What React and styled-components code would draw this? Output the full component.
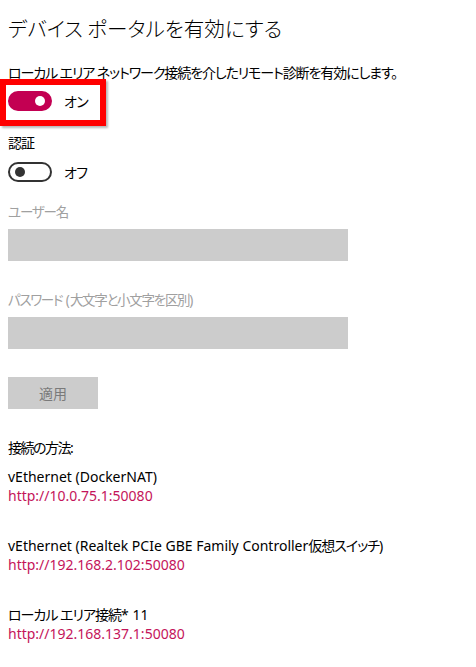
import React from "react";
import styled, { createGlobalStyle } from "styled-components";

const GlobalStyle = createGlobalStyle`
  html, body { margin: 0; padding: 0; background: #ffffff; }
  body {
    font-family: "Noto Sans", "Noto Sans CJK JP", sans-serif;
    color: #000;
    -webkit-font-smoothing: antialiased;
  }
`;

const Page = styled.div`
  width: 476px;
  height: 667px;
  box-sizing: border-box;
  padding: 0 8px;
  overflow: hidden;
  display: flex;
  flex-direction: column;
  align-items: flex-start;
  font-feature-settings: "palt";
`;

const Title = styled.h1`
  margin: 14px 0 0;
  font-family: "Noto Sans CJK JP", sans-serif;
  font-weight: 300;
  font-size: 20.6px;
  line-height: 28px;
  color: #000;
  white-space: nowrap;
`;

const Text = styled.div`
  margin-top: ${(p) => p.$mt || 0}px;
  font-family: "Noto Sans", "Noto Sans CJK JP", sans-serif;
  font-size: ${(p) => p.$size || 14}px;
  letter-spacing: ${(p) => p.$ls || 0}px;
  line-height: ${(p) => p.$lh || 20}px;
  color: ${(p) => (p.$disabled ? "#a0a0a0" : "#000")};
  white-space: nowrap;
`;

const Jp = styled.span`
  letter-spacing: ${(p) => p.$ls || -1}px;
`;

const ToggleRow = styled.div`
  position: relative;
  margin-top: ${(p) => p.$mt}px;
  height: 20px;
  display: flex;
  align-items: center;
  gap: 12px;
`;

const Track = styled.span`
  box-sizing: border-box;
  width: 44px;
  height: 20px;
  border-radius: 10px;
  display: flex;
  align-items: center;
  justify-content: ${(p) => (p.$on ? "flex-end" : "flex-start")};
  padding: 0 5px;
  background: ${(p) => (p.$on ? "#c30052" : "#fff")};
  border: 2px solid ${(p) => (p.$on ? "#c30052" : "#333")};
`;

const Knob = styled.span`
  width: 10px;
  height: 10px;
  border-radius: 50%;
  background: ${(p) => (p.$on ? "#fff" : "#333")};
`;

const ToggleLabel = styled.span`
  font-family: "Noto Sans CJK JP", sans-serif;
  font-size: 14px;
  letter-spacing: -0.5px;
  line-height: 20px;
`;

const Highlight = styled.span`
  position: absolute;
  left: -8px;
  top: -12px;
  width: 106px;
  height: 47px;
  box-sizing: border-box;
  border: 6px solid #ff0000;
  box-shadow: 2px 2px 2px rgba(0, 0, 0, 0.28);
  pointer-events: none;
`;

const Field = styled.div`
  margin-top: ${(p) => p.$mt}px;
  width: 340px;
  height: 32px;
  background: #cccccc;
`;

const Button = styled.div`
  margin-top: 28px;
  width: 90px;
  height: 32px;
  background: #cccccc;
  color: #7a7a7a;
  font-family: "Noto Sans CJK JP", sans-serif;
  font-size: 14px;
  display: flex;
  align-items: center;
  justify-content: center;
`;

const Entry = styled.div`
  margin-top: ${(p) => p.$mt}px;
  display: flex;
  flex-direction: column;
`;

const Link = styled.a`
  font-family: "Noto Sans", sans-serif;
  font-size: 14px;
  line-height: 19px;
  color: #c4145a;
  text-decoration: none;
`;

const entries = [
  { name: "vEthernet (DockerNAT)", url: "http://10.0.75.1:50080", mt: 9 },
  {
    name: (
      <>
        vEthernet (Realtek PCIe GBE Family Controller<Jp>仮想スイッチ</Jp>)
      </>
    ),
    url: "http://192.168.2.102:50080",
    mt: 31,
  },
  {
    name: (
      <>
        <Jp>ローカル エリア接続</Jp>* 11
      </>
    ),
    url: "http://192.168.137.1:50080",
    mt: 31,
  },
];

function Toggle({ on, label, mt, highlight }) {
  return (
    <ToggleRow $mt={mt}>
      <Track $on={on}>
        <Knob $on={on} />
      </Track>
      <ToggleLabel>{label}</ToggleLabel>
      {highlight && <Highlight />}
    </ToggleRow>
  );
}

export default function App() {
  return (
    <>
      <GlobalStyle />
      <Page>
        <Title>デバイス ポータルを有効にする</Title>
        <Text $mt={21} $size={14} $ls={-1.1}>
          ローカル エリア ネットワーク接続を介したリモート診断を有効にします。
        </Text>
        <Toggle on label="オン" mt={8} highlight />
        <Text $mt={22} $ls={-1}>
          認証
        </Text>
        <Toggle on={false} label="オフ" mt={9} />
        <Text $mt={20} $size={13.5} $ls={-1.2} $disabled>
          ユーザー名
        </Text>
        <Field $mt={7} />
        <Text $mt={29} $size={13.5} $disabled>
          <Jp $ls={-1.3}>パスワード</Jp> (<Jp $ls={-1.3}>大文字と小文字を区別</Jp>)
        </Text>
        <Field $mt={7} />
        <Button>適用</Button>
        <Text $mt={29} $ls={-1.5}>
          接続の方法:
        </Text>
        {entries.map((e) => (
          <Entry key={e.url} $mt={e.mt}>
            <Text $lh={19}>{e.name}</Text>
            <Link href="#">{e.url}</Link>
          </Entry>
        ))}
      </Page>
    </>
  );
}
